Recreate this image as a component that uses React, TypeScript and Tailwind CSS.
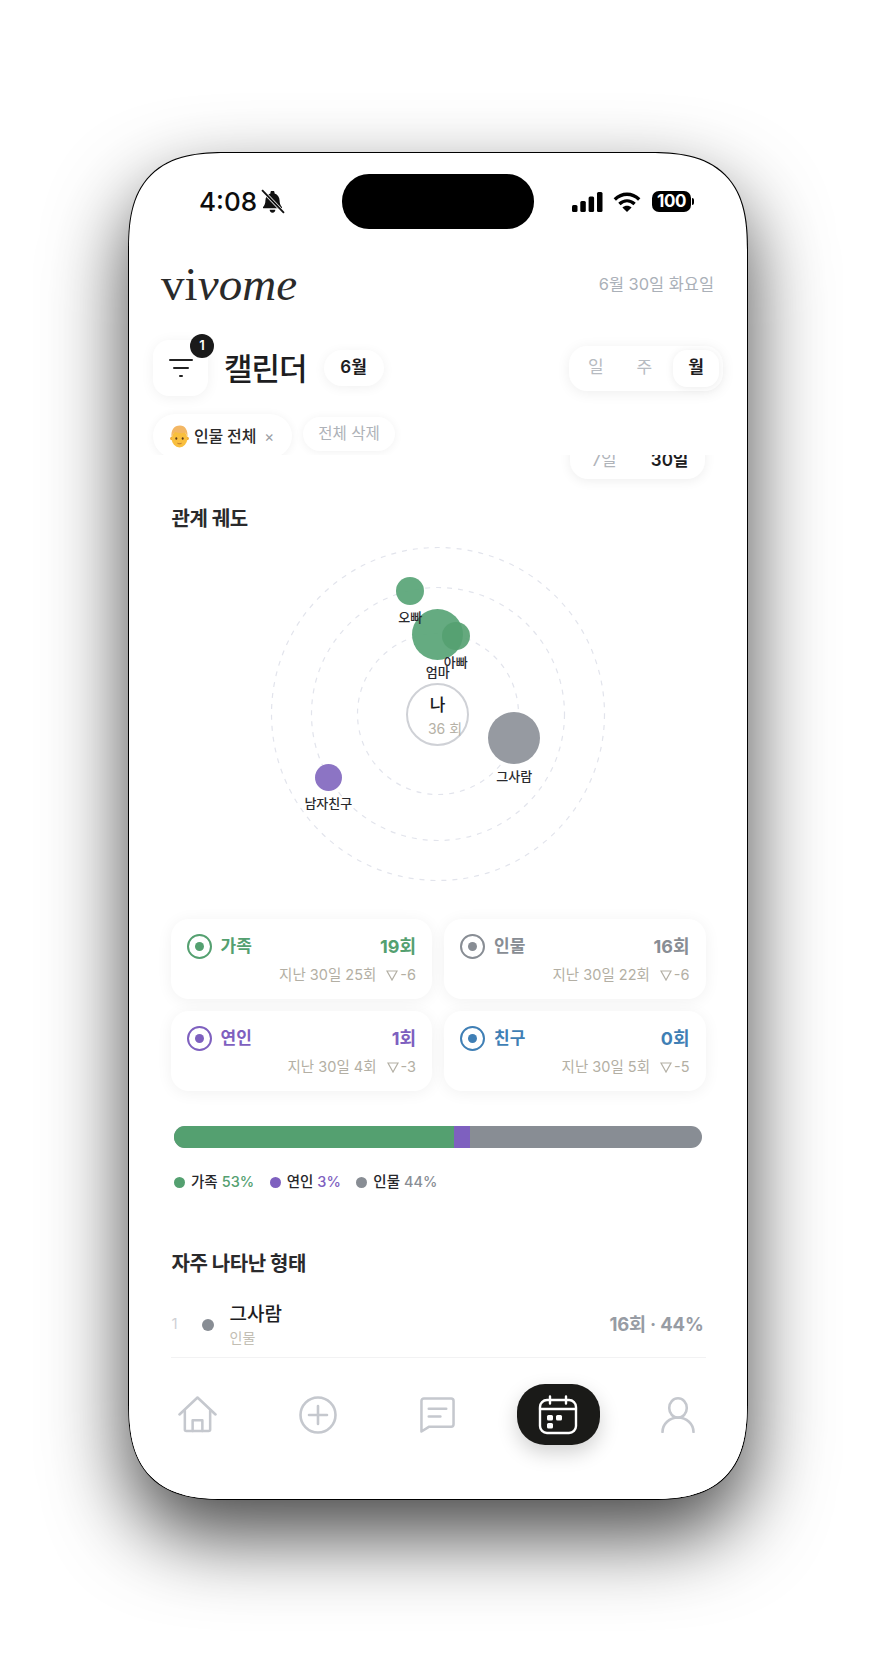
import React from "react";

const FONT = { fontFamily: '"Inter", "Noto Sans CJK KR", sans-serif' };

const nodes = [
  { name: "오빠", x: 410.3, y: 591, r: 14, color: "bg-[#5da67a]/95", labelY: 617 },
  { name: "엄마", x: 437.7, y: 634, r: 25.5, color: "bg-[#5da67a]/95", labelY: 672 },
  { name: "아빠", x: 455.7, y: 635.7, r: 14, color: "bg-[#54a070]/90", labelY: 662 },
  { name: "그사람", x: 514.3, y: 738, r: 26, color: "bg-[#969aa1]", labelY: 776 },
  { name: "남자친구", x: 328.3, y: 777.7, r: 13.5, color: "bg-[#8c74c4]", labelY: 802.7 },
];

const stats = [
  { label: "가족", count: "19회", sub: "지난 30일 25회", delta: "-6", text: "text-[#54a070]", border: "border-[#54a070]", dot: "bg-[#54a070]" },
  { label: "인물", count: "16회", sub: "지난 30일 22회", delta: "-6", text: "text-[#888d94]", border: "border-[#888d94]", dot: "bg-[#888d94]" },
  { label: "연인", count: "1회", sub: "지난 30일 4회", delta: "-3", text: "text-[#7e60bf]", border: "border-[#7e60bf]", dot: "bg-[#7e60bf]" },
  { label: "친구", count: "0회", sub: "지난 30일 5회", delta: "-5", text: "text-[#3f7fb5]", border: "border-[#3f7fb5]", dot: "bg-[#3f7fb5]" },
];

const legend = [
  { label: "가족", pct: "53%", dot: "bg-[#54a070]", text: "text-[#54a070]" },
  { label: "연인", pct: "3%", dot: "bg-[#7e60bf]", text: "text-[#7e60bf]" },
  { label: "인물", pct: "44%", dot: "bg-[#888d94]", text: "text-[#888d94]" },
];

const StatusIcons = () => (
  <div className="flex items-center">
    <svg width="31" height="20" viewBox="0 0 31 20" fill="#000">
      <rect x="0" y="13" width="5.5" height="7" rx="1.5" />
      <rect x="8.3" y="9" width="5.5" height="11" rx="1.5" />
      <rect x="16.6" y="4.5" width="5.5" height="15.5" rx="1.5" />
      <rect x="25" y="0" width="5.5" height="20" rx="1.5" />
    </svg>
    <svg className="ml-[10px]" width="28" height="20" viewBox="0 0 28 20" fill="none" stroke="#000" strokeWidth="3.4">
      <path d="M1.8 7.4C9 .6 19 .6 26.2 7.4" />
      <path d="M6.4 12C11 7.8 17 7.8 21.6 12" />
      <path d="M14 20l-4.6-4.6c2.6-2.2 6.6-2.2 9.2 0L14 20z" fill="#000" stroke="none" />
    </svg>
    <div className="ml-[11px] flex items-center">
      <div className="flex h-[21px] w-[39px] items-center justify-center rounded-[7px] bg-black text-[17px] leading-none font-bold tracking-[-0.5px] text-white">
        100
      </div>
      <div className="ml-[1px] h-[7px] w-[2px] rounded-r-full bg-black" />
    </div>
  </div>
);

const BellSlash = () => (
  <svg width="25" height="25" viewBox="0 0 24 24" fill="#111">
    <path d="M12 1.500a2 2 0 0 0-2 2v.7C7 5.100 5.200 8 5.200 11c0 3-.9 4.700-2.200 6.200-.4.600 0 1.300.7 1.300h16.600c.7 0 1.100-.7.700-1.300-1.300-1.500-2.200-3.200-2.200-6.200 0-3-1.800-5.900-4.800-6.800v-.7a2 2 0 0 0-2-2z" />
    <path d="M9.300 20h5.400a2.700 2.700 0 0 1-5.400 0z" />
    <path d="M2 1 23 23" stroke="#fff" strokeWidth="3.200" />
    <path d="M2 1 23 23" stroke="#111" strokeWidth="1.800" />
  </svg>
);

const BlondEmoji = () => (
  <svg width="19" height="23" viewBox="0 0 19 23">
    <circle cx="1.800" cy="13.500" r="1.700" fill="#f0a832" />
    <circle cx="17.200" cy="13.500" r="1.700" fill="#f0a832" />
    <ellipse cx="9.500" cy="13.500" rx="7.800" ry="9" fill="#f9bf3e" />
    <path d="M1.600 12.500C.6 5 4 .5 10 .5c5 0 8.300 4.500 7.400 12-.5-2.200-1.300-3.800-2.400-4.900-3 .9-6.800.7-9.800-.6-1.600 1.200-3 3.200-3.600 5.500z" fill="#f3b765" />
    <ellipse cx="6.300" cy="13.500" rx="1" ry="1.300" fill="#5b3a1e" />
    <ellipse cx="12.700" cy="13.500" rx="1" ry="1.300" fill="#5b3a1e" />
    <path d="M7.500 18.300c1.300.6 2.700.6 4 0" stroke="#a9622a" strokeWidth=".9" fill="none" />
  </svg>
);

const HomeIcon = () => (
  <svg width="39" height="37" viewBox="0 0 40 38" fill="none" stroke="#c5c8ce" strokeWidth="2.600" strokeLinejoin="round" strokeLinecap="round">
    <path d="M1.500 19 20 1.500 38.500 19" />
    <path d="M7 15v19.500a1.500 1.500 0 0 0 1.500 1.500h23a1.500 1.500 0 0 0 1.500-1.500V15" />
    <path d="M15 36V25h10v11" />
  </svg>
);

const PlusIcon = () => (
  <svg width="38" height="38" viewBox="0 0 38 38" fill="none" stroke="#c5c8ce" strokeWidth="2.600" strokeLinecap="round">
    <circle cx="19" cy="19" r="17.500" />
    <path d="M19 10v18M10 19h18" />
  </svg>
);

const ChatIcon = () => (
  <svg width="35" height="36" viewBox="0 0 36 37" fill="none" stroke="#c5c8ce" strokeWidth="2.600" strokeLinejoin="round" strokeLinecap="round">
    <path d="M4 1.500h28a2.500 2.500 0 0 1 2.500 2.500v24a2.500 2.500 0 0 1-2.500 2.500H9.500L1.500 35.500V4A2.500 2.500 0 0 1 4 1.500z" />
    <path d="M9 12h18M9 20h12" />
  </svg>
);

const CalendarIcon = () => (
  <svg width="40" height="40" viewBox="0 0 40 40" fill="none" stroke="#fff" strokeWidth="2.400" strokeLinecap="round">
    <rect x="2" y="5" width="36" height="33" rx="7" />
    <path d="M2 14h36M12 1.500v7M28 1.500v7" />
    <rect x="9" y="20" width="6" height="5.500" rx="1.500" fill="#fff" stroke="none" />
    <rect x="18" y="20" width="6" height="5.500" rx="1.500" fill="#fff" stroke="none" />
    <rect x="9" y="28" width="6" height="5.500" rx="1.500" fill="#fff" stroke="none" />
  </svg>
);

const UserIcon = () => (
  <svg width="34" height="36" viewBox="0 0 34 36" fill="none" stroke="#c5c8ce" strokeWidth="2.600" strokeLinecap="round">
    <ellipse cx="17" cy="11" rx="8.800" ry="9.700" />
    <path d="M1.500 35c0-8 7-14.500 15.500-14.500S32.500 27 32.500 35" />
  </svg>
);

const Orbit = () => (
  <div className="relative mx-auto mt-[11.500px] h-[340px] w-[340px]">
    <svg className="absolute inset-0" width="340" height="340" viewBox="0 0 340 340" fill="none" stroke="#e2e4ec" strokeWidth="1.200" strokeDasharray="5 6">
      <circle cx="170" cy="170" r="166.500" />
      <circle cx="170" cy="170" r="126.500" />
      <circle cx="170" cy="170" r="80.500" />
    </svg>
    <div className="absolute top-[138.500px] left-[138px] flex h-[63px] w-[63px] flex-col items-center rounded-full border-2 border-[#cfd1d6] bg-white">
      <span className="mt-[8px] text-[17px] leading-[24px] font-medium text-[#1d1d1f]">나</span>
      <span className="mt-[2px] ml-[15px] text-[14px] leading-[20px] whitespace-nowrap text-[#b5b1a6]">36 회</span>
    </div>
    {nodes.map((n) => (
      <div
        key={n.name}
        className={`absolute rounded-full ${n.color}`}
        style={{ left: n.x - 268 - n.r, top: n.y - 544 - n.r, width: n.r * 2, height: n.r * 2 }}
      />
    ))}
    {nodes.map((n) => (
      <span
        key={n.name}
        className="absolute -translate-x-1/2 -translate-y-1/2 text-[13px] leading-none font-medium whitespace-nowrap text-[#2a2a2e]"
        style={{ left: n.x - 268, top: n.labelY - 544 }}
      >
        {n.name}
      </span>
    ))}
  </div>
);

export default function App() {
  return (
    <div className="flex min-h-[1664px] justify-center bg-white pt-[152px]" style={FONT}>
      <div className="relative flex h-[1348px] w-[620px] flex-col overflow-hidden rounded-[100px] border-[1.5px] border-black bg-white shadow-[0_36px_80px_rgba(0,0,0,0.72)] [corner-shape:superellipse(1.44)]">
        <div className="absolute top-[21px] left-[213px] h-[55px] w-[192px] rounded-[27px] bg-black" />

        {/* header */}
        <div className="shrink-0 overflow-hidden">
          <div className="flex h-[97px] items-center justify-between pr-[53px] pl-[70px]">
            <div className="flex items-center gap-[3px]">
              <span className="text-[26px] leading-none font-medium text-[#0d0d0d]">4:08</span>
              <BellSlash />
            </div>
            <StatusIcons />
          </div>
          <div className="flex h-[68px] items-center justify-between pr-[33px] pl-[32px]">
            <span className="text-[47px] leading-none tracking-[0.1px] text-[#2a2a2a]" style={{ fontFamily: '"Liberation Serif", serif' }}>
              vi<span className="italic">vome</span>
            </span>
            <span className="text-[16.400px] text-[#aab0b8]">6월 30일 화요일</span>
          </div>
          <div className="flex items-center pt-[22px] pr-[24px] pl-[24px]">
            <div className="relative flex h-[56px] w-[55px] items-center justify-center rounded-[16px] bg-white shadow-[0_2px_14px_rgba(0,0,0,0.06)]">
              <svg width="26" height="22" viewBox="0 0 26 22" stroke="#222" strokeWidth="2" strokeLinecap="round">
                <path d="M2 3h22M6 11h14M12 19h2" />
              </svg>
              <span className="absolute -top-[6px] -right-[6px] flex h-[24px] w-[24px] items-center justify-center rounded-full bg-[#1a1a1a] text-[13px] font-semibold text-white">
                1
              </span>
            </div>
            <h1 className="ml-[16px] text-[31px] leading-none font-medium tracking-[-1px] text-[#1d1d1f]">캘린더</h1>
            <span className="ml-[17px] flex h-[36px] w-[60px] items-center justify-center rounded-full bg-white text-[17px] font-semibold text-[#1d1d1f] shadow-[0_2px_12px_rgba(0,0,0,0.06)]">
              6월
            </span>
            <div className="ml-auto flex h-[45px] w-[154px] items-center justify-between rounded-[18px] bg-white pr-[4px] pl-[18px] text-[17px] text-[#b7bbc1] shadow-[0_2px_14px_rgba(0,0,0,0.07)]">
              <span className="ml-[1px]">일</span>
              <span className="ml-[12px]">주</span>
              <span className="flex h-[37px] w-[46px] items-center justify-center rounded-[14px] bg-white font-semibold text-[#1d1d1f] shadow-[0_1px_8px_rgba(0,0,0,0.08)]">
                월
              </span>
            </div>
          </div>
          <div className="mt-[18px] flex h-[41px] items-start gap-[11px] pl-[24px]">
            <div className="flex h-[44px] w-[139px] items-center rounded-full bg-white pl-[17px] shadow-[0_1px_10px_rgba(0,0,0,0.06)]">
              <BlondEmoji />
              <span className="ml-[5px] text-[16px] font-medium tracking-[-0.2px] text-[#2a2a2a]">인물 전체</span>
              <span className="ml-[8px] text-[15px] leading-none text-[#9a9ea5]">×</span>
            </div>
            <div className="mt-[3px] flex h-[34px] w-[92px] items-center justify-center rounded-full bg-white text-[15.500px] text-[#aeb2b8] shadow-[0_1px_10px_rgba(0,0,0,0.06)]">
              전체 삭제
            </div>
          </div>
        </div>

        {/* scrolling body */}
        <div className="min-h-0 flex-1 overflow-hidden px-[41.5px]">
          <div className="mr-[1px] -mt-[22px] ml-auto flex h-[46px] w-[135px] items-center justify-between rounded-[18px] bg-white pt-[9px] pr-[16px] pl-[22px] text-[17px] shadow-[0_2px_12px_rgba(0,0,0,0.07)]">
            <span className="text-[#b0b4ba]">7일</span>
            <span className="font-semibold text-[#1d1d1f]">30일</span>
          </div>

          <h2 className="mt-[25.500px] ml-[1px] text-[20px] leading-[28px] font-semibold tracking-[-0.5px] text-[#2a2a2c]">관계 궤도</h2>
          <Orbit />

          <div className="mt-[35px] grid grid-cols-2 gap-[12px]">
            {stats.map((s) => (
              <div key={s.label} className="h-[80px] rounded-[18px] bg-white px-[16px] pt-[14px] shadow-[0_2px_16px_rgba(0,0,0,0.06)]">
                <div className="flex items-center">
                  <span className={`flex h-[25px] w-[25px] items-center justify-center rounded-full border-2 ${s.border}`}>
                    <span className={`h-[9px] w-[9px] rounded-full ${s.dot}`} />
                  </span>
                  <span className={`ml-[9px] text-[17px] font-semibold ${s.text}`}>{s.label}</span>
                  <span className={`ml-auto text-[18px] font-bold ${s.text}`}>{s.count}</span>
                </div>
                <div className="mt-[5px] flex items-center justify-end text-[14.500px] leading-[20px] text-[#b3afa4]">
                  <span>{s.sub}</span>
                  <svg className="mr-[2px] ml-[10px]" width="12" height="11" viewBox="0 0 12 11" fill="none" stroke="#b3afa4" strokeWidth="1.200">
                    <path d="M1 1h10L6 10z" />
                  </svg>
                  <span>{s.delta}</span>
                </div>
              </div>
            ))}
          </div>

          <div className="mx-[3.500px] mt-[35px] flex h-[22px] overflow-hidden rounded-full bg-[#888d94]">
            <div className="w-[280px] bg-[#54a070]" />
            <div className="w-[16px] bg-[#7e60bf]" />
          </div>

          <div className="mx-[3.500px] mt-[24px] flex h-[20px] items-center text-[14.500px]">
            {legend.map((l) => (
              <div key={l.label} className="mr-[15.500px] flex items-center">
                <span className={`mr-[6px] h-[11px] w-[11px] rounded-full ${l.dot}`} />
                <span className="font-medium text-[#26262a]">{l.label}</span>
                <span className={`ml-[4px] font-medium ${l.text}`}>{l.pct}</span>
              </div>
            ))}
          </div>

          <h2 className="mt-[58px] ml-[1px] text-[20px] leading-[28px] font-semibold tracking-[-0.5px] text-[#2a2a2c]">자주 나타난 형태</h2>
          <div className="flex h-[80px] items-center border-b border-[#f2f2f3] pt-[14px]">
            <span className="ml-[1px] w-[30px] text-[15px] text-[#cfd1d5]">1</span>
            <span className="h-[12px] w-[12px] rounded-full bg-[#888d94]" />
            <div className="ml-[16px] flex flex-col">
              <span className="text-[19px] leading-[26px] font-medium text-[#1d1d1f]">그사람</span>
              <span className="text-[14px] leading-[20px] text-[#c2beb3]">인물</span>
            </div>
            <span className="mr-[2px] ml-auto text-[18.500px] font-bold tracking-[-0.2px] text-[#979ca4]">16회 · 44%</span>
          </div>
        </div>

        {/* bottom nav */}
        <div className="grid h-[128px] shrink-0 grid-cols-5 items-start bg-white px-[8.500px] pt-[13px]">
          <div className="flex h-[61px] items-center justify-center"><HomeIcon /></div>
          <div className="flex h-[61px] items-center justify-center"><PlusIcon /></div>
          <div className="flex h-[61px] items-center justify-center"><ChatIcon /></div>
          <div className="flex h-[61px] items-center justify-center">
            <div className="flex h-[61px] w-[83px] items-center justify-center rounded-[28px] bg-[#1a1a18] shadow-[0_8px_20px_rgba(0,0,0,0.18)]">
              <CalendarIcon />
            </div>
          </div>
          <div className="flex h-[61px] items-center justify-center"><UserIcon /></div>
        </div>
      </div>
    </div>
  );
}
